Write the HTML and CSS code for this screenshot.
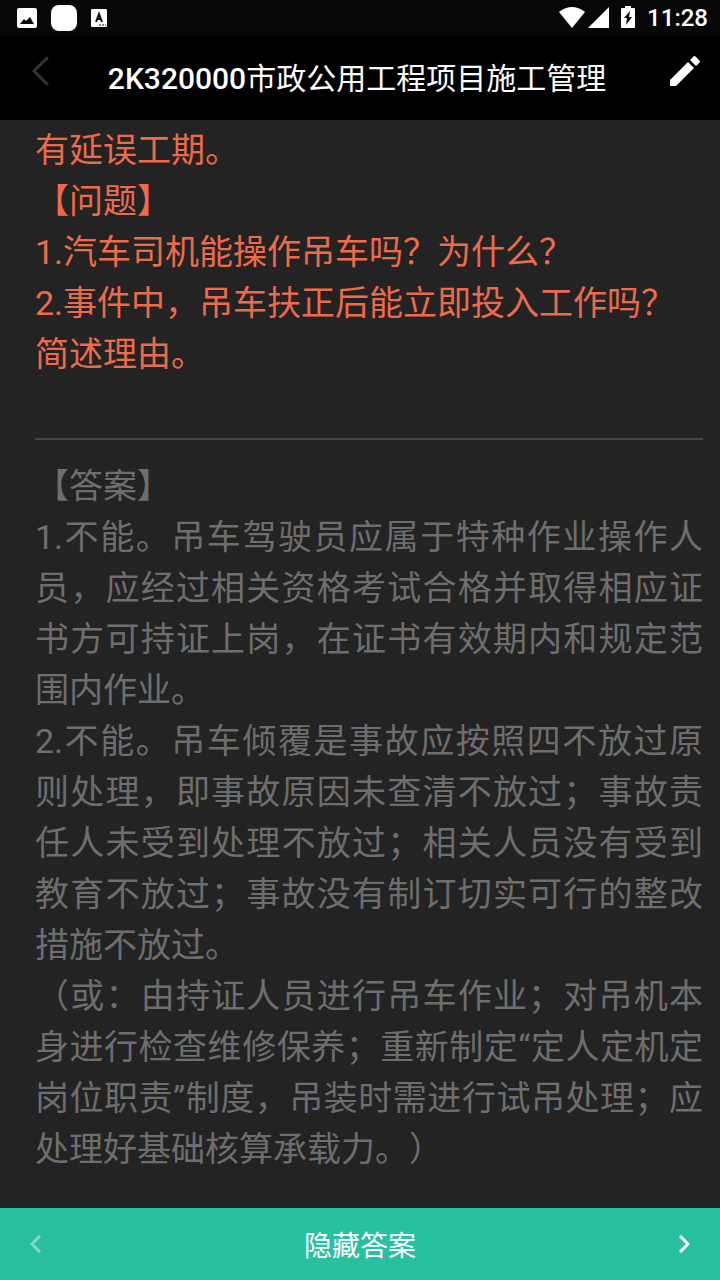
FILE: index.html
```html
<!DOCTYPE html>
<html lang="zh-CN">
<head>
  <meta charset="UTF-8">
  <meta name="viewport" content="width=device-width, initial-scale=1.0">
  <title>2K320000市政公用工程项目施工管理</title>
  <link rel="stylesheet" href="styles.css">
</head>
<body>

  <!-- Status bar -->
  <div class="status-bar">
    <div class="status-left">
      <svg width="20" height="20" viewBox="0 0 20 20">
        <rect width="20" height="20" rx="2" fill="#fff"/>
        <path d="M3 16l4-5 2 2 4-4 4 7z" fill="#070707"/>
      </svg>
      <span class="app-dot"></span>
      <svg width="16" height="18" viewBox="0 0 16 18">
        <rect width="16" height="18" rx="1" fill="#fff"/>
        <path d="M5 13l3-8 3 8M6 10h4" fill="none" stroke="#070707" stroke-width="2"/>
        <path d="M8 16h2M11 16h2M14 16h1" stroke="#070707" stroke-width="1"/>
      </svg>
    </div>
    <div class="status-right">
      <svg class="wifi" width="26" height="21" viewBox="0 0 26 21">
        <path d="M0 5Q13-5 26 5L13 21z" fill="#fff"/>
      </svg>
      <svg class="signal" width="21" height="21" viewBox="0 0 21 21">
        <path d="M21 0v21H0z" fill="#fff"/>
      </svg>
      <svg class="battery" width="14" height="22" viewBox="0 0 14 22">
        <path d="M4 0h6v2h3q1 0 1 1v18q0 1-1 1H1q-1 0-1-1V3q0-1 1-1h3z" fill="#fff"/>
        <path d="M9 5l-6 7h3l-1 7 6-8H8z" fill="#070707"/>
      </svg>
      <span class="time">11:28</span>
    </div>
  </div>

  <header>
    <button class="icon-btn back-btn" aria-label="返回">
      <svg width="18" height="30" viewBox="0 0 18 30">
        <path d="M16 2L3 15l13 13" fill="none" stroke="#333" stroke-width="3" stroke-linecap="round"/>
      </svg>
    </button>
    <h1><span class="code">2K320000</span>市政公用工程项目施工管理</h1>
    <button class="icon-btn edit-btn" aria-label="编辑">
      <svg width="30" height="30" viewBox="0 0 30 30">
        <path d="M0 24L18 6l6 6L6 30H0zM20 4l3-3q1-2 3 0l3 3q2 2 0 3l-3 3z" fill="#fff"/>
      </svg>
    </button>
  </header>

  <main>
    <div class="question">
      <p>有延误工期。</p>
      <p>【问题】</p>
      <p>1.汽车司机能操作吊车吗？为什么？</p>
      <p>2.事件中，吊车扶正后能立即投入工作吗？简述理由。</p>
    </div>
    <hr>
    <div class="answer">
      <p>【答案】</p>
      <p>1.不能。吊车驾驶员应属于特种作业操作人员，应经过相关资格考试合格并取得相应证书方可持证上岗，在证书有效期内和规定范围内作业。</p>
      <p>2.不能。吊车倾覆是事故应按照四不放过原则处理，即事故原因未查清不放过；事故责任人未受到处理不放过；相关人员没有受到教育不放过；事故没有制订切实可行的整改措施不放过。</p>
      <p>（或：由持证人员进行吊车作业；对吊机本身进行检查维修保养；重新制定“定人定机定岗位职责”制度，吊装时需进行试吊处理；应处理好基础核算承载力。）</p>
    </div>
  </main>

  <footer>
    <button class="icon-btn prev-btn" aria-label="上一题" disabled>
      <svg width="12" height="18" viewBox="0 0 12 18">
        <path d="M10 1L2 9l8 8" fill="none" stroke="#fff" stroke-width="3"/>
      </svg>
    </button>
    <button class="toggle-btn">隐藏答案</button>
    <button class="icon-btn next-btn" aria-label="下一题">
      <svg width="12" height="18" viewBox="0 0 12 18">
        <path d="M2 1l8 8-8 8" fill="none" stroke="#fff" stroke-width="3"/>
      </svg>
    </button>
  </footer>

</body>
</html>
```
FILE: styles.css
```css
* {
  box-sizing: border-box;
}
body {
  margin: 0;
  min-height: 100vh;
  display: flex;
  flex-direction: column;
  font-family: Roboto, "Noto Sans CJK SC", sans-serif;
  background-color: #232323;
}
svg {
  display: block;
}
button {
  font-family: inherit;
  border: none;
  padding: 0;
  background: none;
  color: white;
  cursor: pointer;
}

/* Status bar */
.status-bar {
  display: flex;
  justify-content: space-between;
  height: 36px;
  padding: 0 12px 0 17px;
  background-color: #070707;
  color: white;
}
.status-left, .status-right {
  display: flex;
  align-items: center;
}
.status-left {
  gap: 14px;
}
.status-right svg {
  margin-bottom: 2px;
}
.app-dot {
  width: 26px;
  height: 26px;
  border-radius: 8px;
  background-color: white;
}
.signal {
  margin-left: 3px;
}
.battery {
  margin: 0 12px;
}
.time {
  font-size: 24px;
  font-weight: 500;
  line-height: 36px;
}

/* Title bar */
header {
  display: flex;
  height: 84px;
  padding: 0 20px 0 31px;
  background-color: black;
}
header h1 {
  flex: 1;
  margin: 0 5px 0 0;
  font-size: 30px;
  font-weight: 400;
  line-height: 86px;
  text-align: center;
  color: white;
  white-space: nowrap;
}
header .code {
  font-weight: 500;
}
header .icon-btn {
  height: 70px;
}

/* Content */
main {
  flex: 1;
  padding: 5px 17px 30px 35px;
  font-size: 34px;
  line-height: 51px;
  text-spacing-trim: space-all; /* keep full-width brackets full width */
}
main p {
  margin: 0;
}
.question {
  color: #ed6b4c;
}
.answer {
  color: #6e6e6e;
  text-align: justify;
}
hr {
  height: 2px;
  margin: 58px 0 21px;
  border: none;
  background-color: #444;
}

/* Bottom bar */
footer {
  display: flex;
  justify-content: space-between;
  align-items: center;
  height: 72px;
  padding: 0 30px;
  background-color: #29c0a1;
}
.toggle-btn {
  flex: 1;
  height: 72px;
  font-size: 28px;
}
.prev-btn {
  opacity: 0.4;
}
```
